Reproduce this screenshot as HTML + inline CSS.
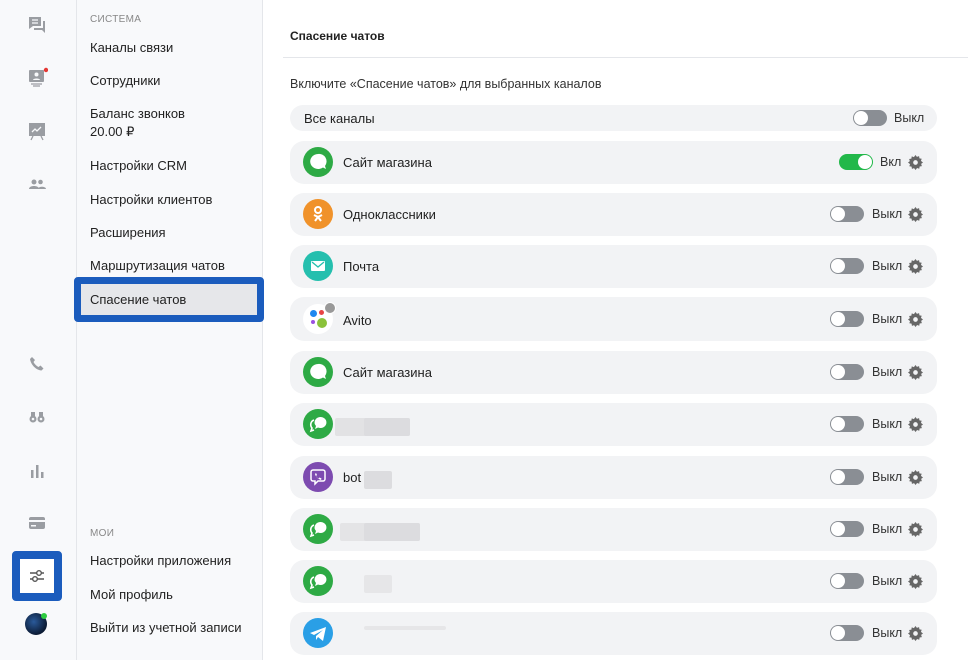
<!DOCTYPE html>
<html><head><meta charset="utf-8"><style>
*{margin:0;padding:0;box-sizing:border-box}
body{width:968px;height:660px;overflow:hidden;background:#fff;font-family:"Liberation Sans",sans-serif;color:#222;position:relative}
.rail{position:absolute;left:0;top:0;width:77px;height:660px;background:#f8f9fb;border-right:1px solid #e4e6ea}
.menu{position:absolute;left:77px;top:0;width:186px;height:660px;background:#f8f9fb;border-right:1px solid #e4e6ea}
.ri{position:absolute;left:26px;width:22px;height:22px}
.sec{position:absolute;left:13px;font-size:10px;color:#888;letter-spacing:.3px}
.mi{position:absolute;left:13px;font-size:13px;color:#222;line-height:18px}
.sel{position:absolute;left:74px;top:277px;width:190px;height:45px;border:7px solid #1b5cbd;border-radius:4px;background:#e6e7ea}
.hdr{position:absolute;left:290px;top:29px;font-size:12px;font-weight:bold;color:#222}
.hline{position:absolute;left:283px;top:57px;width:685px;height:1px;background:#e4e6ea}
.sub{position:absolute;left:290px;top:77px;font-size:12.5px;color:#333}
.row{position:absolute;left:290px;width:647px;background:#f2f3f5;border-radius:14px}
.ic{position:absolute;left:13px;width:30px;height:30px;border-radius:50%}
.nm{position:absolute;left:53px;font-size:13px}
.tg{position:absolute;width:34px;height:16px;border-radius:8px;background:#8a8e94}
.tg::after{content:"";position:absolute;left:1px;top:1px;width:14px;height:14px;border-radius:50%;background:#fff}
.tg.on{background:#22b84a}.tg.on::after{left:19px}
.lb{position:absolute;font-size:12.5px;color:#333}
.gear{position:absolute;width:15px;height:15px}
.blur{position:absolute;height:18px;background:#dcdcdf;border-radius:2px}
</style></head><body>
<div class="rail">
<svg class="ri" style="top:14px" viewBox="0 0 22 22"><path d="M3 3h12v9H7l-4 3z" fill="#9a9da2"/><path d="M17 7h2v12l-3-3H8v-2h9z" fill="#9a9da2"/><path d="M6 6h6M6 9h6" stroke="#f8f9fb" stroke-width="1.3"/></svg>
<svg class="ri" style="top:67px" viewBox="0 0 22 22"><rect x="3" y="3" width="15" height="12" rx="1" fill="#9a9da2"/><circle cx="10.5" cy="7.5" r="2" fill="#f8f9fb"/><path d="M7 13c0-2 7-2 7 0" fill="#f8f9fb"/><path d="M5 17h11M7 19h7" stroke="#9a9da2" stroke-width="1.3"/><circle cx="20" cy="3" r="2.2" fill="#e53935"/></svg>
<svg class="ri" style="top:120px" viewBox="0 0 22 22"><rect x="3" y="3" width="16" height="13" fill="#9a9da2"/><path d="M6 12l3-3 2 2 4-4" stroke="#f8f9fb" stroke-width="1.3" fill="none"/><path d="M7 16l-2 4M15 16l2 4" stroke="#9a9da2" stroke-width="1.3"/></svg>
<svg class="ri" style="top:174px" viewBox="0 0 22 22"><circle cx="8" cy="8" r="2.5" fill="#9a9da2"/><circle cx="14.5" cy="8" r="2.3" fill="#9a9da2"/><path d="M3 15c0-4 10-4 10 0zM12 15c0-3 8-3 8 0z" fill="#9a9da2"/></svg>
<svg class="ri" style="top:353px" viewBox="0 0 22 22"><path d="M6 4l3 3-1.5 2c1 2 3 4 5 5l2-1.5 3 3-2 2C10 17 5 12 4 6z" fill="#9a9da2"/></svg>
<svg class="ri" style="top:406px" viewBox="0 0 22 22"><circle cx="7" cy="13" r="3.5" fill="#9a9da2"/><circle cx="15" cy="13" r="3.5" fill="#9a9da2"/><rect x="5" y="6" width="4" height="6" fill="#9a9da2"/><rect x="13" y="6" width="4" height="6" fill="#9a9da2"/><circle cx="7" cy="13" r="1.3" fill="#f8f9fb"/><circle cx="15" cy="13" r="1.3" fill="#f8f9fb"/></svg>
<svg class="ri" style="top:460px" viewBox="0 0 22 22"><rect x="5" y="10" width="2.5" height="8" fill="#9a9da2"/><rect x="10" y="5" width="2.5" height="13" fill="#9a9da2"/><rect x="15" y="12" width="2.5" height="6" fill="#9a9da2"/></svg>
<svg class="ri" style="top:512px" viewBox="0 0 22 22"><rect x="3" y="5" width="16" height="12" rx="2" fill="#9a9da2"/><rect x="3" y="8" width="16" height="2" fill="#f8f9fb"/><rect x="5" y="13" width="5" height="1.5" fill="#f8f9fb"/></svg>
<div style="position:absolute;left:12px;top:551px;width:50px;height:50px;border:8px solid #1b5cbd;border-radius:4px;background:#fff"></div>
<svg style="position:absolute;left:27px;top:566px" width="20" height="20" viewBox="0 0 20 20"><path d="M3 7h14M3 13h14" stroke="#555" stroke-width="1.4"/><circle cx="12" cy="7" r="2.3" fill="#fff" stroke="#555" stroke-width="1.4"/><circle cx="8" cy="13" r="2.3" fill="#fff" stroke="#555" stroke-width="1.4"/></svg>
<div style="position:absolute;left:25px;top:613px;width:22px;height:22px;border-radius:50%;background:radial-gradient(circle at 40% 40%,#2a5a9a,#0b1a33 70%)"></div>
<div style="position:absolute;left:41px;top:613px;width:6px;height:6px;border-radius:50%;background:#2ecc40"></div>
</div>
<div class="menu">
<div class="sec" style="top:14px">СИСТЕМА</div>
<div class="mi" style="top:39px">Каналы связи</div>
<div class="mi" style="top:72px">Сотрудники</div>
<div class="mi" style="top:105px">Баланс звонков<br>20.00 ₽</div>
<div class="mi" style="top:157px">Настройки CRM</div>
<div class="mi" style="top:191px">Настройки клиентов</div>
<div class="mi" style="top:224px">Расширения</div>
<div class="mi" style="top:257px">Маршрутизация чатов</div>
<div class="sec" style="top:528px">МОИ</div>
<div class="mi" style="top:552px">Настройки приложения</div>
<div class="mi" style="top:586px">Мой профиль</div>
<div class="mi" style="top:619px">Выйти из учетной записи</div>
</div>
<div class="sel"></div>
<div class="mi" style="left:90px;top:291px">Спасение чатов</div>
<div class="hdr">Спасение чатов</div>
<div class="hline"></div>
<div class="sub">Включите «Спасение чатов» для выбранных каналов</div>
<div class="row" style="top:105px;height:26px;border-radius:13px"><div class="nm" style="left:14px;top:6px">Все каналы</div><div class="tg" style="left:563px;top:5px"></div><div class="lb" style="left:604px;top:6px">Выкл</div></div>

<div class="row" style="top:141px;height:43px"><div class="ic" style="top:6px;background:#2eaa45"></div><svg style="position:absolute;left:19px;top:12px" width="18" height="18" viewBox="0 0 18 18"><path d="M9 1a8 7.5 0 1 0 5 13.5l3 1.5-1-3A7.5 7.5 0 0 0 9 1z" fill="#fff"/></svg><div class="nm" style="top:14px">Сайт магазина</div><div class="tg on" style="left:549px;top:13px"></div><div class="lb" style="left:590px;top:14px">Вкл</div><svg class="gear" style="left:618px;top:14px" viewBox="0 0 16 16"><path d="M8 0l1.5 2 2.3-.8.4 2.4 2.4.4-.8 2.3L16 8l-2 1.5.8 2.3-2.4.4-.4 2.4-2.3-.8L8 16l-1.5-2-2.3.8-.4-2.4-2.4-.4.8-2.3L0 8l2-1.5-.8-2.3 2.4-.4.4-2.4 2.3.8z" fill="#666"/><circle cx="8" cy="8" r="2.5" fill="#f2f3f5"/></svg></div>

<div class="row" style="top:193px;height:43px"><div class="ic" style="top:6px;background:#f0922a"></div><svg style="position:absolute;left:21px;top:12px" width="14" height="18" viewBox="0 0 14 18"><circle cx="7" cy="5" r="3" fill="none" stroke="#fff" stroke-width="2"/><path d="M3 10l4 2 4-2M4 16l3-4 3 4" stroke="#fff" stroke-width="2" fill="none"/></svg><div class="nm" style="top:14px">Одноклассники</div><div class="tg" style="left:540px;top:13px"></div><div class="lb" style="left:582px;top:14px">Выкл</div><svg class="gear" style="left:618px;top:14px" viewBox="0 0 16 16"><path d="M8 0l1.5 2 2.3-.8.4 2.4 2.4.4-.8 2.3L16 8l-2 1.5.8 2.3-2.4.4-.4 2.4-2.3-.8L8 16l-1.5-2-2.3.8-.4-2.4-2.4-.4.8-2.3L0 8l2-1.5-.8-2.3 2.4-.4.4-2.4 2.3.8z" fill="#666"/><circle cx="8" cy="8" r="2.5" fill="#f2f3f5"/></svg></div>

<div class="row" style="top:245px;height:43px"><div class="ic" style="top:6px;background:#25bfae"></div><svg style="position:absolute;left:21px;top:16px" width="14" height="10" viewBox="0 0 14 10"><rect width="14" height="10" rx="1" fill="#fff"/><path d="M1 1l6 5 6-5" stroke="#25bfae" stroke-width="1.3" fill="none"/></svg><div class="nm" style="top:14px">Почта</div><div class="tg" style="left:540px;top:13px"></div><div class="lb" style="left:582px;top:14px">Выкл</div><svg class="gear" style="left:618px;top:14px" viewBox="0 0 16 16"><path d="M8 0l1.5 2 2.3-.8.4 2.4 2.4.4-.8 2.3L16 8l-2 1.5.8 2.3-2.4.4-.4 2.4-2.3-.8L8 16l-1.5-2-2.3.8-.4-2.4-2.4-.4.8-2.3L0 8l2-1.5-.8-2.3 2.4-.4.4-2.4 2.3.8z" fill="#666"/><circle cx="8" cy="8" r="2.5" fill="#f2f3f5"/></svg></div>

<div class="row" style="top:297px;height:44px"><div class="ic" style="top:7px;background:#fff"></div><div style="position:absolute;left:20px;top:13px;width:7px;height:7px;border-radius:50%;background:#1e88f0"></div><div style="position:absolute;left:21px;top:23px;width:4px;height:4px;border-radius:50%;background:#9b50e0"></div><div style="position:absolute;left:27px;top:21px;width:10px;height:10px;border-radius:50%;background:#8ac23a"></div><div style="position:absolute;left:29px;top:13px;width:5px;height:5px;border-radius:50%;background:#e84545"></div><div style="position:absolute;left:34px;top:5px;width:12px;height:12px;border-radius:50%;background:#999;border:1px solid #fff"></div><div class="nm" style="top:16px">Avito</div><div class="tg" style="left:540px;top:14px"></div><div class="lb" style="left:582px;top:15px">Выкл</div><svg class="gear" style="left:618px;top:15px" viewBox="0 0 16 16"><path d="M8 0l1.5 2 2.3-.8.4 2.4 2.4.4-.8 2.3L16 8l-2 1.5.8 2.3-2.4.4-.4 2.4-2.3-.8L8 16l-1.5-2-2.3.8-.4-2.4-2.4-.4.8-2.3L0 8l2-1.5-.8-2.3 2.4-.4.4-2.4 2.3.8z" fill="#666"/><circle cx="8" cy="8" r="2.5" fill="#f2f3f5"/></svg></div>

<div class="row" style="top:351px;height:43px"><div class="ic" style="top:6px;background:#2eaa45"></div><svg style="position:absolute;left:19px;top:12px" width="18" height="18" viewBox="0 0 18 18"><path d="M9 1a8 7.5 0 1 0 5 13.5l3 1.5-1-3A7.5 7.5 0 0 0 9 1z" fill="#fff"/></svg><div class="nm" style="top:14px">Сайт магазина</div><div class="tg" style="left:540px;top:13px"></div><div class="lb" style="left:582px;top:14px">Выкл</div><svg class="gear" style="left:618px;top:14px" viewBox="0 0 16 16"><path d="M8 0l1.5 2 2.3-.8.4 2.4 2.4.4-.8 2.3L16 8l-2 1.5.8 2.3-2.4.4-.4 2.4-2.3-.8L8 16l-1.5-2-2.3.8-.4-2.4-2.4-.4.8-2.3L0 8l2-1.5-.8-2.3 2.4-.4.4-2.4 2.3.8z" fill="#666"/><circle cx="8" cy="8" r="2.5" fill="#f2f3f5"/></svg></div>

<div class="row" style="top:403px;height:43px"><div class="ic" style="top:6px;background:#2eaa45"></div><svg style="position:absolute;left:18px;top:12px" width="20" height="18" viewBox="0 0 20 18"><path d="M12 2a6 5.5 0 1 1-2 10.5L7 14l1-3A6 5.5 0 0 1 12 2z" fill="#fff"/><path d="M6 5a5 5 0 0 0-2 8l-1 3 3-1" fill="none" stroke="#fff" stroke-width="1.6"/></svg><div class="blur" style="left:45px;top:15px;width:75px;background:#e2e2e4"></div><div class="blur" style="left:74px;top:15px;width:46px"></div><div class="tg" style="left:540px;top:13px"></div><div class="lb" style="left:582px;top:14px">Выкл</div><svg class="gear" style="left:618px;top:14px" viewBox="0 0 16 16"><path d="M8 0l1.5 2 2.3-.8.4 2.4 2.4.4-.8 2.3L16 8l-2 1.5.8 2.3-2.4.4-.4 2.4-2.3-.8L8 16l-1.5-2-2.3.8-.4-2.4-2.4-.4.8-2.3L0 8l2-1.5-.8-2.3 2.4-.4.4-2.4 2.3.8z" fill="#666"/><circle cx="8" cy="8" r="2.5" fill="#f2f3f5"/></svg></div>

<div class="row" style="top:456px;height:43px"><div class="ic" style="top:6px;background:#7d4bb0"></div><svg style="position:absolute;left:20px;top:13px" width="16" height="17" viewBox="0 0 16 17"><path d="M3 1h10a2 2 0 0 1 2 2v7a2 2 0 0 1-2 2H8l-3 3v-3H3a2 2 0 0 1-2-2V3a2 2 0 0 1 2-2z" fill="none" stroke="#fff" stroke-width="1.5"/><path d="M6 4l1 2-1 1c.5 1 1.5 2 2.5 2.5l1-1 2 1-.5 1.5C8 10 5.5 7.5 5 5z" fill="#fff"/></svg><div class="nm" style="top:14px">bot</div><div class="blur" style="left:74px;top:15px;width:28px"></div><div class="tg" style="left:540px;top:13px"></div><div class="lb" style="left:582px;top:14px">Выкл</div><svg class="gear" style="left:618px;top:14px" viewBox="0 0 16 16"><path d="M8 0l1.5 2 2.3-.8.4 2.4 2.4.4-.8 2.3L16 8l-2 1.5.8 2.3-2.4.4-.4 2.4-2.3-.8L8 16l-1.5-2-2.3.8-.4-2.4-2.4-.4.8-2.3L0 8l2-1.5-.8-2.3 2.4-.4.4-2.4 2.3.8z" fill="#666"/><circle cx="8" cy="8" r="2.5" fill="#f2f3f5"/></svg></div>

<div class="row" style="top:508px;height:43px"><div class="ic" style="top:6px;background:#2eaa45"></div><svg style="position:absolute;left:18px;top:12px" width="20" height="18" viewBox="0 0 20 18"><path d="M12 2a6 5.5 0 1 1-2 10.5L7 14l1-3A6 5.5 0 0 1 12 2z" fill="#fff"/><path d="M6 5a5 5 0 0 0-2 8l-1 3 3-1" fill="none" stroke="#fff" stroke-width="1.6"/></svg><div class="blur" style="left:50px;top:15px;width:80px;background:#e4e4e6"></div><div class="blur" style="left:74px;top:15px;width:56px"></div><div class="tg" style="left:540px;top:13px"></div><div class="lb" style="left:582px;top:14px">Выкл</div><svg class="gear" style="left:618px;top:14px" viewBox="0 0 16 16"><path d="M8 0l1.5 2 2.3-.8.4 2.4 2.4.4-.8 2.3L16 8l-2 1.5.8 2.3-2.4.4-.4 2.4-2.3-.8L8 16l-1.5-2-2.3.8-.4-2.4-2.4-.4.8-2.3L0 8l2-1.5-.8-2.3 2.4-.4.4-2.4 2.3.8z" fill="#666"/><circle cx="8" cy="8" r="2.5" fill="#f2f3f5"/></svg></div>

<div class="row" style="top:560px;height:43px"><div class="ic" style="top:6px;background:#2eaa45"></div><svg style="position:absolute;left:18px;top:12px" width="20" height="18" viewBox="0 0 20 18"><path d="M12 2a6 5.5 0 1 1-2 10.5L7 14l1-3A6 5.5 0 0 1 12 2z" fill="#fff"/><path d="M6 5a5 5 0 0 0-2 8l-1 3 3-1" fill="none" stroke="#fff" stroke-width="1.6"/></svg><div class="blur" style="left:74px;top:15px;width:28px;background:#e6e6e8"></div><div class="tg" style="left:540px;top:13px"></div><div class="lb" style="left:582px;top:14px">Выкл</div><svg class="gear" style="left:618px;top:14px" viewBox="0 0 16 16"><path d="M8 0l1.5 2 2.3-.8.4 2.4 2.4.4-.8 2.3L16 8l-2 1.5.8 2.3-2.4.4-.4 2.4-2.3-.8L8 16l-1.5-2-2.3.8-.4-2.4-2.4-.4.8-2.3L0 8l2-1.5-.8-2.3 2.4-.4.4-2.4 2.3.8z" fill="#666"/><circle cx="8" cy="8" r="2.5" fill="#f2f3f5"/></svg></div>

<div class="row" style="top:612px;height:43px"><div class="ic" style="top:6px;background:#2a9fe6"></div><svg style="position:absolute;left:19px;top:14px" width="18" height="16" viewBox="0 0 18 16"><path d="M1 7L17 1l-3 14-5-4-2 3V10l7-6-9 5z" fill="#fff"/></svg><div class="blur" style="left:74px;top:14px;width:82px;height:4px;background:#e6e6e8"></div><div class="tg" style="left:540px;top:13px"></div><div class="lb" style="left:582px;top:14px">Выкл</div><svg class="gear" style="left:618px;top:14px" viewBox="0 0 16 16"><path d="M8 0l1.5 2 2.3-.8.4 2.4 2.4.4-.8 2.3L16 8l-2 1.5.8 2.3-2.4.4-.4 2.4-2.3-.8L8 16l-1.5-2-2.3.8-.4-2.4-2.4-.4.8-2.3L0 8l2-1.5-.8-2.3 2.4-.4.4-2.4 2.3.8z" fill="#666"/><circle cx="8" cy="8" r="2.5" fill="#f2f3f5"/></svg></div>
</body></html>
